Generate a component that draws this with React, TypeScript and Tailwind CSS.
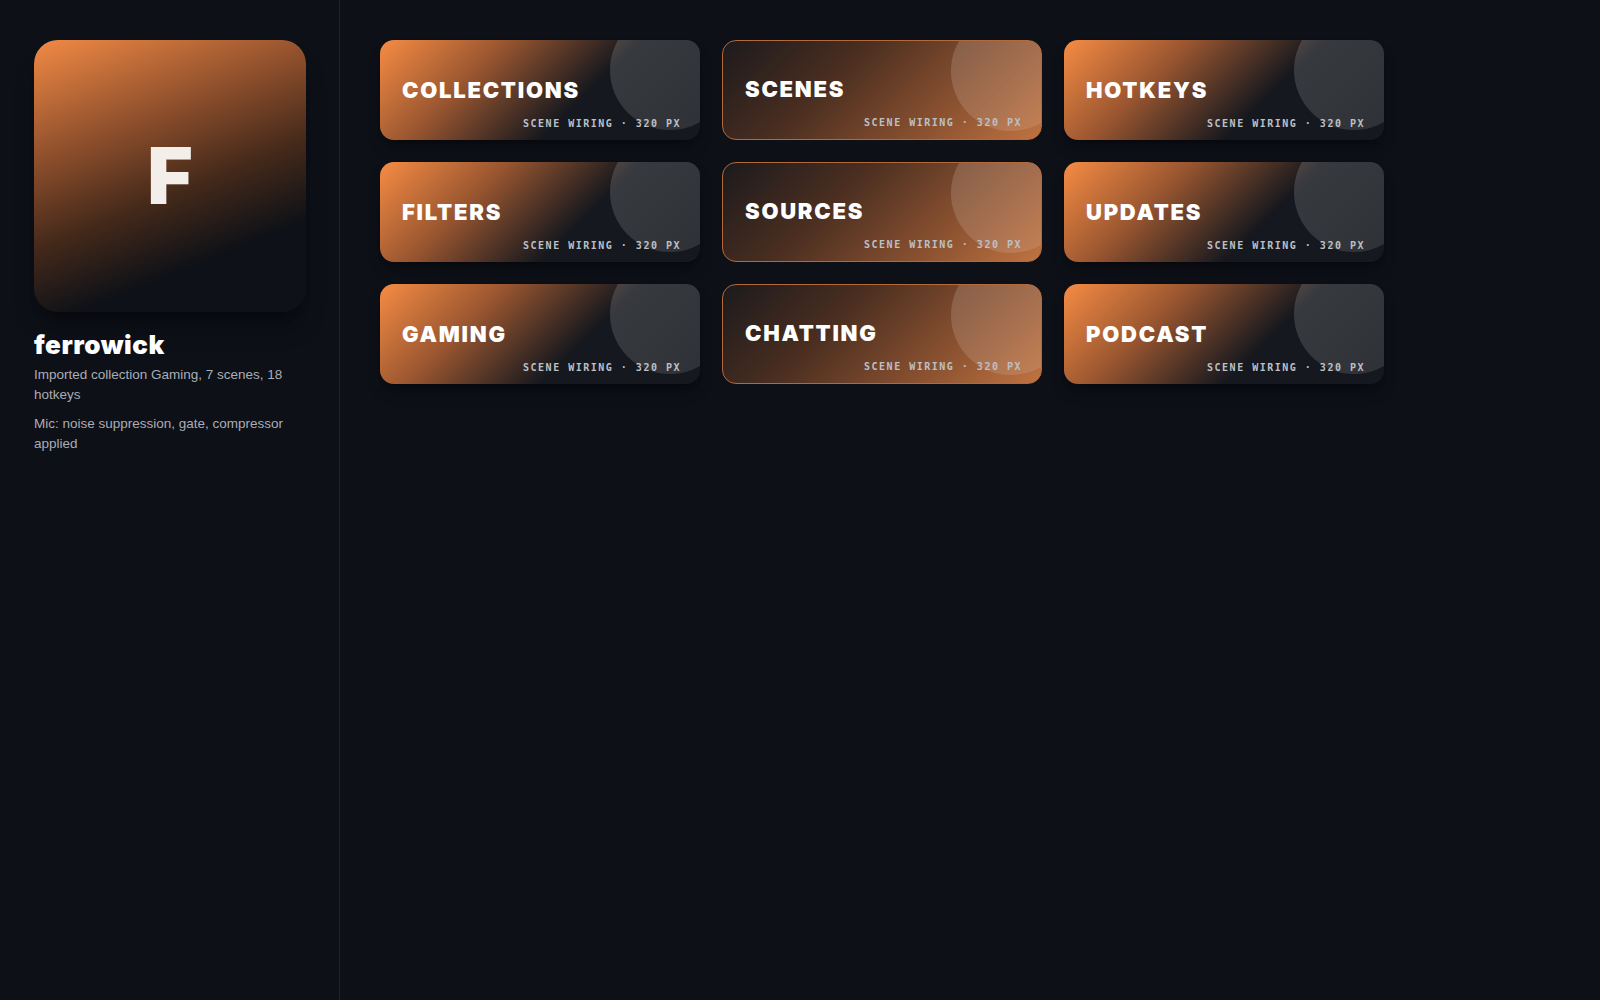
const tiles = [
  { name: "COLLECTIONS", outline: false },
  { name: "SCENES", outline: true },
  { name: "HOTKEYS", outline: false },
  { name: "FILTERS", outline: false },
  { name: "SOURCES", outline: true },
  { name: "UPDATES", outline: false },
  { name: "GAMING", outline: false },
  { name: "CHATTING", outline: true },
  { name: "PODCAST", outline: false },
];

const Tile = ({ name, outline }: { name: string; outline: boolean }) => {
  return (
    <div
      className={
        outline
          ? "relative overflow-hidden h-[100px] w-[320px] rounded-[14px] border border-[#b4693a] bg-[linear-gradient(135deg,#1c1a1d_0%,#4a2e20_35%,#8a5130_70%,#c07341_100%)]"
          : "relative overflow-hidden h-[100px] w-[320px] rounded-[14px] bg-[linear-gradient(135deg,#f68c44_0%,#9a5630_30%,#15181e_62%)] shadow-lg shadow-black/30"
      }
    >
      <div className="absolute -top-[30px] -right-[30px] h-[120px] w-[120px] rounded-full bg-[linear-gradient(135deg,rgba(255,255,255,0.16),rgba(255,255,255,0.10))]"></div>
      <div className="relative flex h-full flex-col justify-end pl-[22px] pr-[19px] pb-[11px]">
        <h3 className="font-['Inter',sans-serif] text-[22px] font-black leading-none tracking-[0.08em] text-white">
          {name}
        </h3>
        <p className="mt-[18px] text-right font-['DejaVu_Sans_Mono',monospace] text-[10px] font-bold leading-none tracking-[0.15em] text-[#bcc0c7]">
          SCENE WIRING · 320 PX
        </p>
      </div>
    </div>
  );
};

const App = () => {
  return (
    <div className="flex min-h-[1000px] w-full bg-[#0d1017] font-['Liberation_Sans',sans-serif]">
      <aside className="w-[340px] shrink-0 border-r border-[#1e222a] px-[34px] pt-[40px]">
        <div className="flex h-[272px] w-[272px] items-center justify-center rounded-[24px] bg-[linear-gradient(158deg,#f28a45_0%,#8e4f2c_32%,#44291a_55%,#0e1117_76%)] shadow-xl shadow-black/30">
          <span className="font-['Inter',sans-serif] text-[78px] font-black leading-none text-[#f3eeea]">F</span>
        </div>
        <h1 className="mt-[17px] font-['Inter',sans-serif] text-[26px] font-black leading-tight tracking-[0.02em] text-white">
          ferrowick
        </h1>
        <p className="mt-[3px] text-[13.5px] leading-[20px] text-[#a9adb5]">
          Imported collection Gaming, 7 scenes, 18 hotkeys
        </p>
        <p className="mt-[9px] text-[13.5px] leading-[20px] text-[#a9adb5]">
          Mic: noise suppression, gate, compressor applied
        </p>
      </aside>
      <main className="flex-1 px-[40px] pt-[40px]">
        <div className="grid grid-cols-[repeat(3,320px)] gap-x-[22px] gap-y-[22px]">
          {tiles.map((t) => (
            <Tile key={t.name} name={t.name} outline={t.outline} />
          ))}
        </div>
      </main>
    </div>
  );
};

export default App;
